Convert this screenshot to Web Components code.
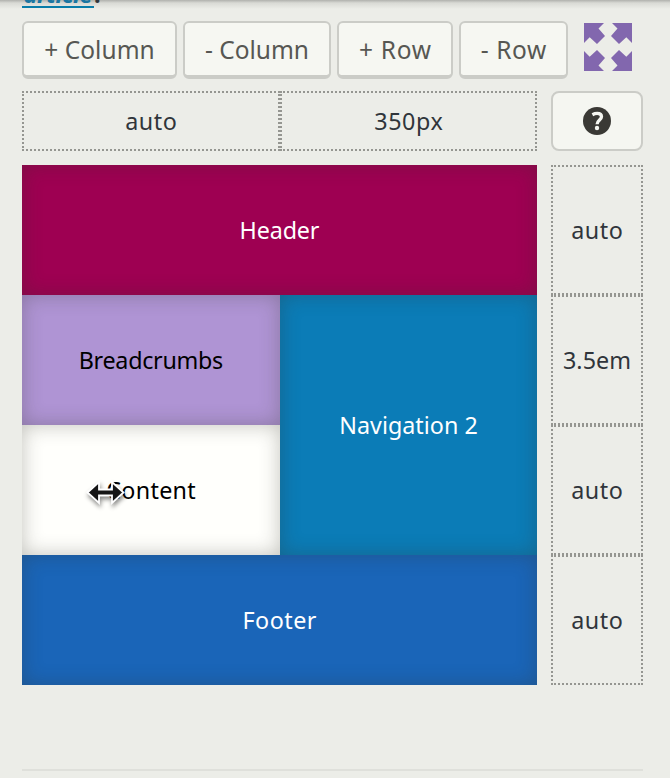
<!DOCTYPE html>
<html lang="en">
<head>
<meta charset="utf-8">
<title>Grid layout builder</title>
<style>
html,body{margin:0;height:100%;overflow:hidden;background:#ecede8}
body{font-family:"Noto Sans","Open Sans",sans-serif;color:#30353b}
</style>
</head>
<body>
<layout-builder></layout-builder>
<script>
const define = (name, html, setup) => {
  const template = document.createElement('template');
  template.innerHTML = html;
  customElements.define(name, class extends HTMLElement {
    constructor() {
      super();
      this.attachShadow({mode: 'open'}).append(template.content.cloneNode(true));
    }
    connectedCallback() { if (setup) setup(this); }
  });
};

/* Single-line label whose tracking is adjusted to a given run length. */
define('fit-text', `<style>:host{display:block;line-height:1;padding-top:2px}span{display:block;width:max-content;white-space:pre}</style><span><slot></slot></span>`, el => {
  const span = el.shadowRoot.querySelector('span');
  const target = parseFloat(el.getAttribute('run'));
  const count = el.textContent.length;
  const gap = (target - span.getBoundingClientRect().width) / (count - 1);
  span.style.letterSpacing = gap.toFixed(3) + 'px';
  span.style.marginRight = (-gap).toFixed(3) + 'px';
});

define('tool-button', `
<style>
:host{display:flex;align-items:center;justify-content:center;box-sizing:border-box;height:58px;
 border:2px solid #cbccc7;border-bottom-width:4px;border-radius:6px;background:#f6f7f2;color:#575753;font-size:24.5px}
</style><slot></slot>`);

define('expand-icon', `
<style>:host{display:block;width:48px;height:48px}svg{display:block}</style>
<svg width="48" height="48" viewBox="0 0 48 48" fill="#8267ae">
<defs><path id="a" d="M0 0H20L14.5 5.5L21 13L13 21L5.7 14.2L0 20Z"/></defs>
<use href="#a"/><use href="#a" transform="matrix(-1 0 0 1 48 0)"/>
<use href="#a" transform="matrix(1 0 0 -1 0 48)"/><use href="#a" transform="matrix(-1 0 0 -1 48 48)"/>
</svg>`);

define('help-button', `
<style>
:host{display:flex;align-items:center;justify-content:center;box-sizing:border-box;width:92px;height:60px;
 border:2px solid #cbccc7;border-radius:8px;background:#f5f6f1}
</style>
<svg width="28" height="28" viewBox="0 0 28 28"><circle cx="14" cy="14" r="14" fill="#3a3935"/>
<path d="M9.4 7.7Q11.8 6.4 14.2 6.4C17.2 6.4 18.5 7.8 18.5 9.8C18.5 12.9 14.1 13.2 14.1 17.2" fill="none" stroke="#f5f6f1" stroke-width="3.3"/>
<circle cx="14" cy="21" r="2.2" fill="#f5f6f1"/></svg>`);

define('track-size', `
<style>
:host{display:flex;align-items:center;justify-content:center;box-sizing:border-box;border:2px dotted #959691;font-size:23.3px}
</style><slot></slot>`);

define('grid-area', `
<style>
:host{display:flex;align-items:center;justify-content:center;background:var(--fill);color:var(--ink,#fff);
 box-shadow:inset 0 0 20px rgba(50,50,40,.3);font-size:23.3px}
</style><slot></slot>`);

define('resize-cursor', `
<style>:host{position:absolute;left:64px;top:54px;width:42px;height:30px}svg{overflow:visible;filter:drop-shadow(1px 3px 2px rgba(0,0,0,.45))}</style>
<svg width="42" height="30" viewBox="0 0 42 30">
<path d="M1.5 13.5L13 3V10.5H26V3L37.5 13.5L26 24V16.5H13V24Z" fill="#161616" stroke="#fff" stroke-width="1.8"/>
</svg>`);

define('top-edge', `
<style>
:host{display:block;height:21px;overflow:hidden;background:linear-gradient(#b0b1ad,#d9dad5 30%,#ecede8 90%) top/100% 10px no-repeat}
.line{display:flex;align-items:flex-start;margin:-18px 0 0 22px;font:italic 700 23.5px/26px "Noto Sans",sans-serif}
.link{display:flex;justify-content:center;align-items:flex-end;box-sizing:border-box;width:72px;height:26px;border-bottom:2px solid #087ca9;color:#1a76a2}
fit-text{margin-bottom:0}
.dot{font-style:normal;margin-top:-1px}
</style>
<div class="line"><span class="link"><fit-text run="69">article</fit-text></span><span class="dot">.</span></div>`);

define('layout-builder', `
<style>
:host{display:block;width:670px;height:778px}
.tools{display:flex;gap:6px;padding-left:22px}
expand-icon{margin:2px 0 0 10px}
.board{display:grid;grid-template-columns:515px 92px;grid-template-rows:60px 520px;gap:14px;padding:12px 0 0 22px}
.cols{display:grid;grid-template-columns:258px 257px}
.rows{display:grid;grid-template-rows:repeat(4,130px)}
.areas{display:grid;grid-template-columns:258px 257px;grid-template-rows:repeat(4,130px)}
.wide{grid-column:1/3}
.nav{grid-column:2;grid-row:2/4}
.content{position:relative}
.rule{height:2px;background:#dfe0db;margin:84px 27px 0 22px}
</style>
<top-edge></top-edge>
<div class="tools">
<tool-button style="width:155px"><fit-text run="110.5">+ Column</fit-text></tool-button>
<tool-button style="width:148px"><fit-text run="104">- Column</fit-text></tool-button>
<tool-button style="width:116px"><fit-text run="72">+ Row</fit-text></tool-button>
<tool-button style="width:109px"><fit-text run="65.5">- Row</fit-text></tool-button>
<expand-icon></expand-icon>
</div>
<div class="board">
<div class="cols">
<track-size><fit-text run="51.5">auto</fit-text></track-size>
<track-size><fit-text run="68.5">350px</fit-text></track-size>
</div>
<help-button></help-button>
<div class="areas">
<grid-area class="wide" style="--fill:#9e0052"><fit-text run="80">Header</fit-text></grid-area>
<grid-area style="--fill:#af94d4;--ink:#000"><fit-text run="144.5">Breadcrumbs</fit-text></grid-area>
<grid-area class="nav" style="--fill:#0b7cb7"><fit-text run="138.5">Navigation 2</fit-text></grid-area>
<grid-area class="content" style="--fill:#fffffc;--ink:#000"><fit-text run="89.5">Content</fit-text><resize-cursor></resize-cursor></grid-area>
<grid-area class="wide" style="--fill:#1a65b8"><fit-text run="74">Footer</fit-text></grid-area>
</div>
<div class="rows">
<track-size><fit-text run="51.5">auto</fit-text></track-size>
<track-size><fit-text run="68">3.5em</fit-text></track-size>
<track-size><fit-text run="51.5">auto</fit-text></track-size>
<track-size><fit-text run="51.5">auto</fit-text></track-size>
</div>
</div>
<div class="rule"></div>`);
</script>
</body>
</html>
